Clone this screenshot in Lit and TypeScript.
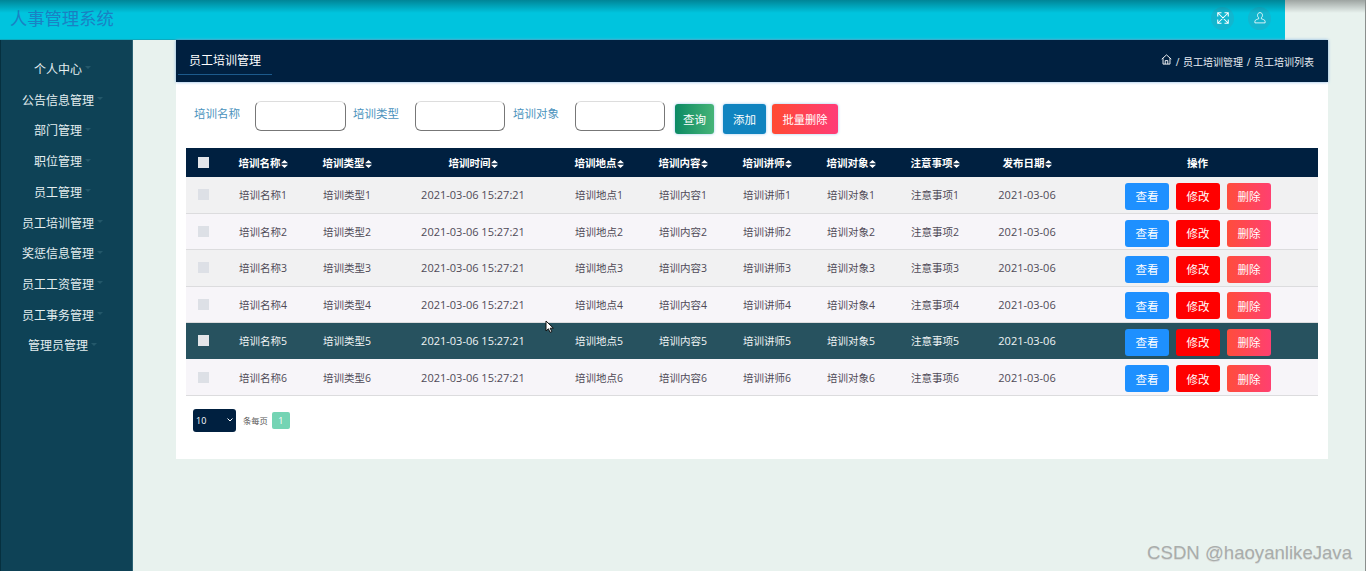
import { html, css, LitElement, svg } from 'lit';
import { customElement } from 'lit/decorators.js';
import { classMap } from 'lit/directives/class-map.js';

const MENU = ['个人中心', '公告信息管理', '部门管理', '职位管理', '员工管理', '员工培训管理', '奖惩信息管理', '员工工资管理', '员工事务管理', '管理员管理'];
const COLUMNS = [
  { title: '培训名称', cls: 'c-84' },
  { title: '培训类型', cls: 'c-84' },
  { title: '培训时间', cls: 'c-time' },
  { title: '培训地点', cls: 'c-84' },
  { title: '培训内容', cls: 'c-84' },
  { title: '培训讲师', cls: 'c-84' },
  { title: '培训对象', cls: 'c-84' },
  { title: '注意事项', cls: 'c-84' },
  { title: '发布日期', cls: 'c-date' },
];
const ROWS = [1, 2, 3, 4, 5, 6];

const expandIcon = svg`<svg class="ico" viewBox="0 0 16 16" fill="none" stroke="#fff" stroke-width="1.4">
  <path d="M1 1l14 14M15 1L1 15M1 6V1h5M10 1h5v5M15 10v5h-5M6 15H1v-5"/></svg>`;
const userIcon = svg`<svg class="ico" viewBox="0 0 16 16" fill="none" stroke="#fff" stroke-width="1.1">
  <path d="M8 .8C5.900.8 4.700 2.400 4.700 4.400c0 1.400.6 2.600 1.500 3.300v1.400C4.400 9.700 1.200 10.500 1.200 12.300v2.200h13.600v-2.200c0-1.800-3.200-2.600-5-3.200V7.700c.9-.7 1.500-1.900 1.500-3.300C11.300 2.400 10.100.8 8 .8z"/></svg>`;
const homeIcon = svg`<svg class="home" viewBox="0 0 12 12" fill="none" stroke="#fff" stroke-width="1">
  <path d="M.8 5.600L6 1l5.200 4.600M2.200 4.600V11h7.600V4.600M4.600 11V7.200h2.800V11"/></svg>`;
const cursorIcon = svg`<svg class="cursor" viewBox="0 0 10 14">
  <path d="M1 1v10l2.400-2.200L5 12.400l1.800-.8-1.600-3.400h3.200z" fill="#fff" stroke="#111" stroke-width="1"/></svg>`;

@customElement('app-root')
export class AppRoot extends LitElement {
  static styles = css`
    :host {
      display: block;
      position: relative;
      width: 1366px;
      height: 571px;
      overflow: hidden;
      background: #e8f2ee;
      font-family: "Open Sans", "Noto Sans CJK SC", sans-serif;
    }
    .topbar {
      display: flex;
      align-items: center;
      justify-content: space-between;
      width: 1285px;
      height: 40px;
      box-sizing: border-box;
      padding: 0 14px 3px 10px;
      background: #00c4de;
      border-bottom: 1px solid #10a9bd;
    }
    .brand { font-size: 17.3px; color: #1a82c4; line-height: 37px; }
    .tools { display: flex; gap: 14px; }
    .tool {
      display: flex;
      align-items: center;
      justify-content: center;
      width: 23px;
      height: 23px;
      border-radius: 50%;
      background: #12b6cf;
    }
    .ico { width: 12px; height: 12px; }
    .body { display: flex; height: 531px; }
    .side {
      flex: none;
      width: 133px;
      box-sizing: border-box;
      padding: 13.6px 8px 0 0;
      background: #0e4256;
      border-left: 1px solid #06303f;
      border-right: 1px solid #2b6274;
    }
    .menu {
      display: flex;
      align-items: center;
      justify-content: center;
      height: 30.72px;
      gap: 3px;
      font-size: 12px;
      color: #e4eef0;
    }
    .caret {
      width: 0;
      height: 0;
      margin-top: -2px;
      border: 3.5px solid transparent;
      border-top-color: #24586a;
      border-bottom: 0;
    }
    .main { flex: none; padding-left: 43px; }
    .panel {
      width: 1152px;
      height: 419px;
      background: #fff;
    }
    .crumbbar {
      display: flex;
      justify-content: space-between;
      align-items: flex-start;
      height: 42px;
      box-sizing: border-box;
      padding: 0 14px 0 2px;
      background: #002040;
      box-shadow: 0 0 3px #7fb0e0;
      color: #fff;
    }
    .tab {
      width: 94px;
      height: 35px;
      box-sizing: border-box;
      padding-left: 11px;
      line-height: 41px;
      font-size: 12px;
      border-bottom: 1px solid #1c5a8c;
    }
    .crumbs {
      display: flex;
      align-items: center;
      gap: 4px;
      height: 42px;
      font-size: 10px;
      word-spacing: 1px;
      color: #e8edf2;
    }
    .home { width: 11px; height: 11px; margin-top: -4px; }
    .search {
      display: flex;
      align-items: flex-start;
      height: 66px;
      box-sizing: border-box;
      padding: 19px 0 0 18px;
    }
    .label { width: 46px; font-size: 11.5px; line-height: 30px; color: #4b93bd; margin-top: -2px; white-space: nowrap; }
    .field {
      width: 91px;
      height: 30px;
      box-sizing: border-box;
      margin: 0 7px 0 15px;
      border: 1px solid #777;
      border-top-color: #ddd;
      border-radius: 6px;
      background: #fff;
    }
    .field.wide { width: 90px; margin-right: 8px; margin-left: 16px; }
    .field.last { width: 90px; margin-left: 16px; }
    .btn {
      height: 30px;
      margin-top: 3px;
      padding: 0;
      border: 0;
      border-radius: 3px;
      color: #fff;
      font: inherit;
      font-size: 11.5px;
      box-shadow: 0 0 3px #9cc8f0;
    }
    .query { width: 39px; margin-left: 3px; background: linear-gradient(90deg, #0c8a64, #46b478); }
    .add { width: 43px; margin-left: 9px; background: #1084c0; }
    .batch { width: 66px; margin-left: 6px; background: linear-gradient(90deg, #ff4a32, #ff3c78); font-size: 11.2px; }
    .wrap { padding: 0 10px; }
    table { width: 1132px; border-collapse: collapse; table-layout: fixed; font-size: 10.5px; }
    .c-check { width: 35px; }
    .c-84 { width: 84px; }
    .c-time { width: 168px; }
    .c-date { width: 100px; }
    th {
      height: 29px;
      padding: 0;
      background: #002040;
      color: #fff;
      font-size: 10.5px;
      font-weight: 700;
    }
    .sort { display: inline-block; vertical-align: -1px; width: 7px; height: 8px; }
    td {
      height: 36.4px;
      box-sizing: border-box;
      padding: 0;
      text-align: center;
      color: #4f4a57;
      border-bottom: 1px solid #dcdcde;
    }
    td.num { font-size: 11px; }
    tbody tr:nth-child(odd) td { background: #f1f1f2; }
    tbody tr:nth-child(even) td { background: #f7f5f9; }
    tbody tr.hover td { background: #27525f; color: #f0f4f5; border-bottom-color: #27525f; }
    .box { display: block; width: 11px; height: 11px; margin: 0 0 0 12px; background: #dde0e6; }
    th .box, .hover .box { background: #e4e6ea; }
    .ops { display: flex; gap: 7px; margin: 3px 0 0 48px; }
    .op {
      width: 44px;
      height: 27px;
      padding: 0;
      border: 0;
      border-radius: 3px;
      color: #fff;
      font: inherit;
      font-size: 11.5px;
    }
    .view { background: #1e90ff; }
    .edit { background: #ff0000; }
    .del { background: linear-gradient(90deg, #ff4d3c, #ff4070); }
    .pager { display: flex; align-items: center; padding: 13px 0 0 17px; }
    .size {
      display: flex;
      align-items: center;
      justify-content: space-between;
      width: 43px;
      height: 23px;
      box-sizing: border-box;
      padding: 0 3px;
      border-radius: 3px;
      background: #002040;
      color: #fff;
      font-size: 9px;
    }
    .chev { width: 6px; height: 4px; }
    .per { margin: 0 4px 0 7px; font-size: 8.3px; color: #555; }
    .page {
      width: 18px;
      height: 17px;
      line-height: 17px;
      text-align: center;
      border-radius: 2px;
      background: #74d4b4;
      color: #fff;
      font-size: 9px;
    }
    .shade {
      position: absolute;
      left: 0;
      top: 0;
      width: 100%;
      height: 13px;
      background: linear-gradient(180deg, rgba(0, 0, 0, 0.32), rgba(0, 0, 0, 0));
    }
    .edge { position: absolute; right: 0; top: 0; width: 1px; height: 100%; background: #8a8f8d; }
    .cursor { position: absolute; left: 545px; top: 320px; width: 10px; height: 14px; }
    .mark {
      position: absolute;
      right: 14px;
      bottom: 7px;
      font-family: "Liberation Sans", sans-serif;
      font-size: 18.6px;
      color: #a9adab;
      text-shadow: 0 1px 0 #d8dcda;
    }
  `;

  private sortIcon() {
    return svg`<svg class="sort" viewBox="0 0 7 8" fill="#fff"><path d="M3.5 0l3.5 3.3H0zM3.5 8L0 4.7h7z"/></svg>`;
  }

  private row(n: number) {
    return html`
      <tr class=${classMap({ hover: n === 5 })}>
        <td><span class="box"></span></td>
        <td>培训名称${n}</td>
        <td>培训类型${n}</td>
        <td class="num">2021-03-06 15:27:21</td>
        <td>培训地点${n}</td>
        <td>培训内容${n}</td>
        <td>培训讲师${n}</td>
        <td>培训对象${n}</td>
        <td>注意事项${n}</td>
        <td class="num">2021-03-06</td>
        <td>
          <div class="ops">
            <button class="op view">查看</button>
            <button class="op edit">修改</button>
            <button class="op del">删除</button>
          </div>
        </td>
      </tr>
    `;
  }

  render() {
    return html`
      <header class="topbar">
        <div class="brand">人事管理系统</div>
        <div class="tools">
          <span class="tool">${expandIcon}</span>
          <span class="tool">${userIcon}</span>
        </div>
      </header>
      <div class="body">
        <nav class="side">
          ${MENU.map((m) => html`<div class="menu">${m}<span class="caret"></span></div>`)}
        </nav>
        <main class="main">
          <section class="panel">
            <div class="crumbbar">
              <div class="tab">员工培训管理</div>
              <div class="crumbs">${homeIcon}<span>/ 员工培训管理 / 员工培训列表</span></div>
            </div>
            <div class="search">
              <span class="label">培训名称</span>
              <input class="field" />
              <span class="label">培训类型</span>
              <input class="field wide" />
              <span class="label">培训对象</span>
              <input class="field last" />
              <button class="btn query">查询</button>
              <button class="btn add">添加</button>
              <button class="btn batch">批量删除</button>
            </div>
            <div class="wrap">
              <table>
                <colgroup>
                  <col class="c-check" />
                  ${COLUMNS.map((c) => html`<col class=${c.cls} />`)}
                  <col />
                </colgroup>
                <thead>
                  <tr>
                    <th><span class="box"></span></th>
                    ${COLUMNS.map((c) => html`<th>${c.title}${this.sortIcon()}</th>`)}
                    <th>操作</th>
                  </tr>
                </thead>
                <tbody>${ROWS.map((n) => this.row(n))}</tbody>
              </table>
            </div>
            <div class="pager">
              <div class="size">
                <span>10</span>
                <svg class="chev" viewBox="0 0 6 4" fill="none" stroke="#fff" stroke-width="1"><path d="M.5.5L3 3 5.5.5"/></svg>
              </div>
              <span class="per">条每页</span>
              <span class="page">1</span>
            </div>
          </section>
        </main>
      </div>
      <div class="shade"></div>
      <div class="edge"></div>
      ${cursorIcon}
      <div class="mark">CSDN @haoyanlikeJava</div>
    `;
  }
}
